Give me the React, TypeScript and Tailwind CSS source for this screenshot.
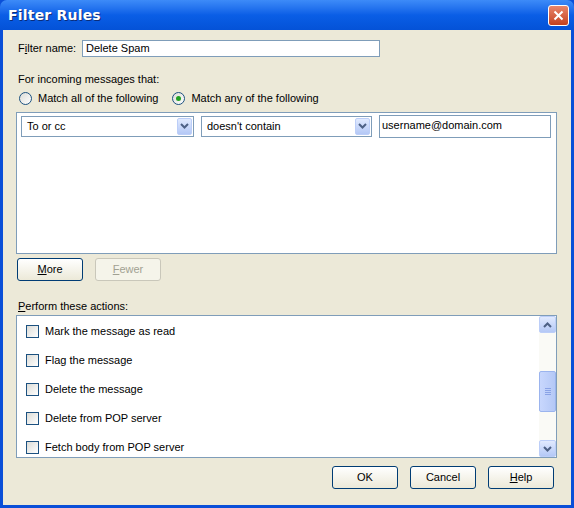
import React from "react";

const font = { fontFamily: '"Liberation Sans", Arial, sans-serif' };

function Arrow({ down = true }: { down?: boolean }) {
  return (
    <svg width="9" height="6" viewBox="0 0 9 6">
      <path d={down ? "M1 1 L4.5 4.5 L8 1" : "M1 5 L4.5 1.5 L8 5"} stroke="#4d6185" strokeWidth="2" fill="none" />
    </svg>
  );
}

function Combo({ text, w }: { text: string; w: string }) {
  return (
    <div className={`${w} h-[21px] border border-[#7f9db9] bg-white flex items-center`}>
      <span className="flex-1 pl-[5px] pt-[1px]">{text}</span>
      <div className="w-[15px] h-[17px] mr-[1px] rounded-[2px] bg-gradient-to-b from-[#e1eafe] to-[#b4c8f6] border border-[#bccef8] flex items-center justify-center">
        <Arrow />
      </div>
    </div>
  );
}

function Btn({ children, disabled, w = "w-[66px]" }: { children: React.ReactNode; disabled?: boolean; w?: string }) {
  return (
    <div
      className={`${w} h-[23px] rounded-[3px] border flex items-center justify-center ${
        disabled
          ? "border-[#c9c7ba] text-[#a1a192] bg-[#f5f4ea]"
          : "border-[#003c74] bg-gradient-to-b from-white to-[#ece9d8] text-black"
      }`}
    >
      {children}
    </div>
  );
}

function Check({ label }: { label: string }) {
  return (
    <div className="h-[29px] flex items-center pl-[9px]">
      <div className="w-[13px] h-[13px] border border-[#1c5180] bg-gradient-to-br from-[#dcdcd7] to-white" />
      <span className="ml-[6px]">{label}</span>
    </div>
  );
}

export default function App() {
  return (
    <div style={font} className="w-[574px] h-[508px] bg-[#0a4fd8] text-[11px] text-black flex flex-col overflow-hidden">
      <div className="h-[30px] rounded-t-[7px] bg-gradient-to-b from-[#3d8bf8] via-[#0a5ee6] to-[#0452d7] flex items-center justify-between pl-[8px] pr-[5px]">
        <span className="text-white font-bold text-[14px] tracking-[0.2px]" style={{ fontFamily: '"DejaVu Sans", sans-serif', textShadow: "1px 1px #0b2d7a" }}>
          Filter Rules
        </span>
        <div className="w-[21px] h-[21px] rounded-[3px] border border-white bg-gradient-to-b from-[#e8856a] to-[#c4401c] flex items-center justify-center">
          <svg width="11" height="11" viewBox="0 0 11 11">
            <path d="M1.5 1.5 L9.5 9.5 M9.5 1.5 L1.5 9.5" stroke="white" strokeWidth="2" />
          </svg>
        </div>
      </div>
      <div className="flex-1 mx-[3px] mb-[3px] bg-[#ece9d8] flex flex-col px-[13px]">
        <div className="flex items-center mt-[10px] h-[16px]">
          <span className="ml-[2px] w-[64px]">F<u>i</u>lter name:</span>
          <div className="w-[298px] h-[17px] border border-[#7f9db9] bg-white pl-[3px] leading-[15px]">Delete Spam</div>
        </div>
        <div className="mt-[15px] ml-[2px]">For incoming messages that:</div>
        <div className="flex items-center mt-[3px] h-[16px] ml-[3px]">
          <div className="w-[13px] h-[13px] rounded-full border border-[#1c5180] bg-gradient-to-br from-[#dcdcd7] to-white" />
          <span className="ml-[6px]">Match all of the following</span>
          <div className="ml-[14px] w-[13px] h-[13px] rounded-full border border-[#1c5180] bg-gradient-to-br from-[#dcdcd7] to-white flex items-center justify-center">
            <div className="w-[5px] h-[5px] rounded-full bg-[#21a121]" />
          </div>
          <span className="ml-[6px]">Match any of the following</span>
        </div>
        <div className="mt-[5px] h-[142px] w-[541px] border border-[#7f9db9] bg-white">
          <div className="flex items-start mt-[2px] ml-[4px]">
            <Combo text="To or cc" w="w-[173px] mt-[1px]" />
            <Combo text="doesn't contain" w="w-[171px] ml-[7px] mt-[1px]" />
            <div className="ml-[7px] w-[172px] h-[23px] border border-[#7f9db9] pl-[2px] leading-[18px]">username@domain.com</div>
          </div>
        </div>
        <div className="flex mt-[4px] ml-[1px] gap-[12px]">
          <Btn><span><u>M</u>ore</span></Btn>
          <Btn disabled><span><u>F</u>ewer</span></Btn>
        </div>
        <div className="mt-[17px] ml-[2px]"><u>P</u>erform these actions:</div>
        <div className="mt-[1px] h-[143px] w-[541px] border border-[#7f9db9] bg-white flex overflow-hidden">
          <div className="flex-1 pt-[1px]">
            <Check label="Mark the message as read" />
            <Check label="Flag the message" />
            <Check label="Delete the message" />
            <Check label="Delete from POP server" />
            <Check label="Fetch body from POP server" />
          </div>
          <div className="w-[17px] bg-[#fafaf6] flex flex-col">
            <div className="h-[17px] rounded-[2px] bg-gradient-to-b from-[#e1eafe] to-[#b4c8f6] border border-[#bccef8] flex items-center justify-center"><Arrow down={false} /></div>
            <div className="h-[38px]" />
            <div className="h-[41px] rounded-[2px] bg-gradient-to-r from-[#c8d7fd] to-[#b4c8f6] border border-[#9bb4ee] flex items-center justify-center">
              <div className="flex flex-col gap-[1px]">
                <div className="w-[6px] h-[1px] bg-[#8aa3e6]" /><div className="w-[6px] h-[1px] bg-[#8aa3e6]" /><div className="w-[6px] h-[1px] bg-[#8aa3e6]" /><div className="w-[6px] h-[1px] bg-[#8aa3e6]" />
              </div>
            </div>
            <div className="flex-1" />
            <div className="h-[17px] rounded-[2px] bg-gradient-to-b from-[#e1eafe] to-[#b4c8f6] border border-[#bccef8] flex items-center justify-center"><Arrow /></div>
          </div>
        </div>
        <div className="flex justify-end gap-[12px] mt-[8px] mr-[4px]">
          <Btn><span>OK</span></Btn>
          <Btn><span>Cancel</span></Btn>
          <Btn><span><u>H</u>elp</span></Btn>
        </div>
      </div>
    </div>
  );
}
